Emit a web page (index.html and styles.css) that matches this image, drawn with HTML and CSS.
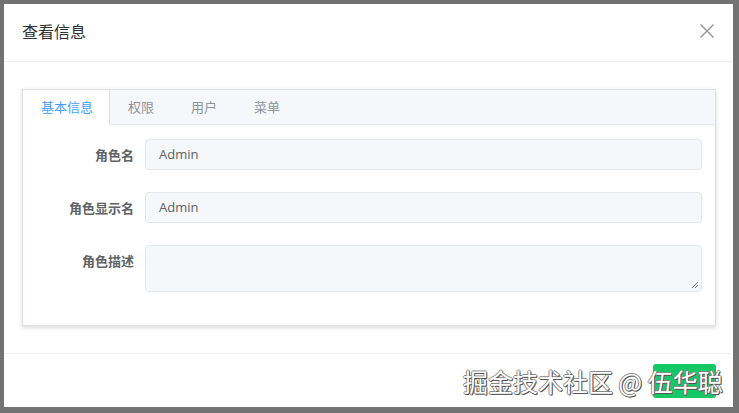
FILE: index.html
```html
<!DOCTYPE html>
<html lang="zh">
<head>
<meta charset="utf-8">
<link rel="stylesheet" href="styles.css">
</head>
<body>
<div class="dialog">
  <div class="dlg-header">
    <span class="dlg-title">查看信息</span>
    <svg class="dlg-close" width="16" height="16" viewBox="0 0 16 16"><path d="M1.5 1.5L14.5 14.5M14.5 1.5L1.5 14.5" stroke="#909399" stroke-width="1.4" fill="none"/></svg>
  </div>
  <div class="dlg-body">
    <div class="tabs">
      <div class="tabs-nav">
        <div class="tab active">基本信息</div>
        <div class="tab">权限</div>
        <div class="tab">用户</div>
        <div class="tab">菜单</div>
      </div>
      <div class="tabs-content">
        <div class="form-row">
          <label class="form-label">角色名</label>
          <div class="input">Admin</div>
        </div>
        <div class="form-row">
          <label class="form-label">角色显示名</label>
          <div class="input">Admin</div>
        </div>
        <div class="form-row">
          <label class="form-label">角色描述</label>
          <div class="input textarea">
            <svg class="resize" width="8" height="8" viewBox="0 0 8 8"><path d="M1 7L7 1M4 7L7 4" stroke="#606266" stroke-width="0.9"/></svg>
          </div>
        </div>
      </div>
    </div>
  </div>
  <div class="dlg-footer">
    <div class="btn"></div>
    <div class="watermark">掘金技术社区 @ 伍华聪</div>
  </div>
</div>
</body>
</html>
```
FILE: styles.css
```css
* { box-sizing: border-box; }
html, body { margin: 0; padding: 0; }
body {
  width: 739px;
  height: 413px;
  background: #727272;
  padding: 4px 6px 6px 4px;
  font-family: "Noto Sans CJK SC", "Noto Sans", sans-serif;
  overflow: hidden;
}
.dialog {
  width: 729px;
  height: 403px;
  background: #fff;
  display: flex;
  flex-direction: column;
  position: relative;
}
.dlg-header {
  height: 58px;
  border-bottom: 1px solid #ebeef5;
  display: flex;
  align-items: center;
  justify-content: space-between;
  padding: 0 16px 4px 18px;
  margin-right: 2px;
}
.dlg-title {
  font-size: 16px;
  color: #303133;
  line-height: 24px;
}
.dlg-body {
  padding: 27px 15px 27px 18px;
  border-bottom: 1px solid #ebeef5;
  margin-right: 2px;
}
.tabs {
  border: 1px solid #dcdfe6;
  box-shadow: 0 2px 4px rgba(0,0,0,0.12), 0 0 6px rgba(0,0,0,0.04);
  background: #fff;
}
.tabs-nav {
  display: flex;
  height: 35px;
  background: #f5f7fa;
  border-bottom: 1px solid #e4e7ed;
}
.tab {
  font-size: 13px;
  color: #909399;
  padding: 0 18px;
  line-height: 34px;
  border-right: 1px solid transparent;
}
.tab.active {
  background: #fff;
  color: #409eff;
  border-right-color: #dcdfe6;
  height: 35px;
  padding: 0 16px 0 18px;
}
.tabs-content {
  padding: 14px 13px 33px 0;
  display: flex;
  flex-direction: column;
  gap: 22px;
}
.form-row {
  display: flex;
  align-items: flex-start;
}
.form-label {
  width: 122px;
  padding-right: 11px;
  text-align: right;
  font-size: 13px;
  font-weight: 600;
  color: #606266;
  line-height: 31px;
  flex-shrink: 0;
}
.input {
  flex: 1;
  height: 31px;
  background: #f5f7fa;
  border: 1px solid #e4e7ed;
  border-radius: 4px;
  padding: 0 13px;
  font-size: 13px;
  color: #606266;
  line-height: 29px;
  font-family: "Open Sans", "Noto Sans", sans-serif;
}
.input.textarea {
  height: 47px;
  display: flex;
  justify-content: flex-end;
  align-items: flex-end;
  padding: 0 2px 2px 0;
}
.resize { display: block; }
.dlg-footer {
  flex: 1;
  position: relative;
}
.btn {
  position: absolute;
  left: 649px;
  top: 10px;
  width: 63px;
  height: 34px;
  background: #16c766;
  border-radius: 3px;
}
.watermark {
  position: absolute;
  left: 459px;
  top: 10px;
  font-size: 25px;
  line-height: 35px;
  color: #fff;
  white-space: nowrap;
  text-shadow: 1px 1px 0 #555, -1px 0 0 #888, 0 -1px 0 #888, 1px 0 0 #777, 0 1px 0 #777;
}
```
